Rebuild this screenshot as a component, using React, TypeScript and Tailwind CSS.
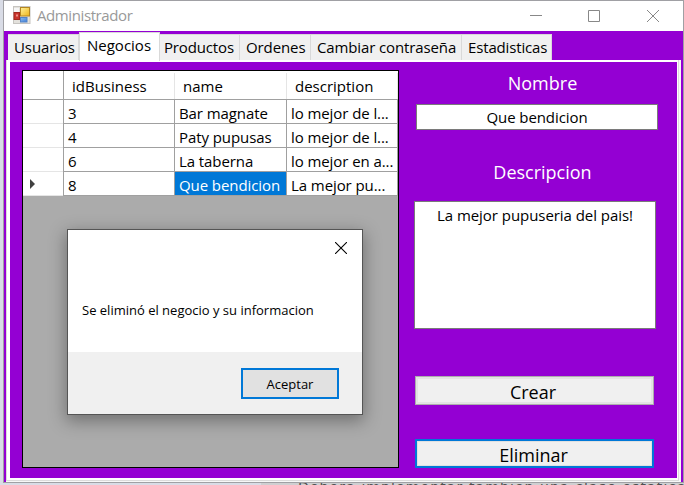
import React from "react";

const rows = [
  { id: "3", name: "Bar magnate", description: "lo mejor de l..." },
  { id: "4", name: "Paty pupusas", description: "lo mejor de l..." },
  { id: "6", name: "La taberna", description: "lo mejor en a..." },
  { id: "8", name: "Que bendicion", description: "La mejor pu..." },
];

const tabs = [
  { label: "Usuarios", box: "w-[71px] pl-[6px]", text: "tracking-[-0.1px]" },
  { label: "Negocios", box: "", text: "" },
  { label: "Productos", box: "w-[80px] pl-[4px]", text: "tracking-[-0.15px]" },
  { label: "Ordenes", box: "w-[71px] pl-[6px]", text: "tracking-[-0.1px]" },
  { label: "Cambiar contraseña", box: "w-[151px] pl-[6px]", text: "tracking-[-0.12px]" },
  { label: "Estadisticas", box: "w-[90px] pl-[6px]", text: "tracking-[-0.15px]" },
];

function AppIcon() {
  return (
    <svg width="18" height="18" viewBox="0 0 18 18" className="ml-[9px] mt-[5px] shrink-0">
      <defs>
        <linearGradient id="gold" x1="0" y1="0" x2="1" y2="1">
          <stop offset="0" stopColor="#fff19b" />
          <stop offset="1" stopColor="#edb519" />
        </linearGradient>
        <linearGradient id="sky" x1="0" y1="0" x2="1" y2="1">
          <stop offset="0" stopColor="#8ab9f0" />
          <stop offset="1" stopColor="#3f7fd8" />
        </linearGradient>
      </defs>
      <rect x="0.5" y="0.5" width="16.5" height="17" fill="#e3e1dc" stroke="#c6c4c0" />
      <rect x="1" y="2" width="5" height="4" fill="#f6f6f6" />
      <rect x="1" y="6.500" width="5.500" height="7" fill="#c8342d" stroke="#a4281f" />
      <rect x="3" y="8.500" width="2" height="2" fill="#ee9188" />
      <rect x="7.500" y="1.500" width="9" height="8.500" fill="url(#gold)" stroke="#b48622" />
      <rect x="7.500" y="11.500" width="6.500" height="4.500" fill="url(#sky)" stroke="#5283c8" />
    </svg>
  );
}

function TitleBar() {
  return (
    <div className="flex h-[30px] shrink-0 bg-white">
      <AppIcon />
      <span className="ml-[6px] mt-[3px] w-[400px] text-[15px] leading-[23px] tracking-[-0.4px] text-[#999]">Administrador</span>
      <svg width="130" height="30" viewBox="0 0 130 30" className="ml-[92px]" fill="none" stroke="#888">
        <path d="M1 14.500H13M59.500 9.500H70.500V20.500H59.500ZM118 9L130 21M130 9L118 21" />
      </svg>
    </div>
  );
}

function TabStrip() {
  return (
    <div className="flex h-[29px] shrink-0 items-end pl-[4px]">
      {tabs.map((tab, i) =>
        i === 1 ? (
          <div key={tab.label} className="relative z-10 h-[29px] w-[81px] border-x border-t border-[#d9d9d9] bg-white pl-[7px] pt-px leading-[23px]">
            <span className="whitespace-nowrap">{tab.label}</span>
          </div>
        ) : (
          <div key={tab.label} className={`h-[27px] border-r border-t border-[#d9d9d9] bg-[#f0f0f0] pt-px leading-[23px] ${tab.box}`}>
            <span className={`whitespace-nowrap ${tab.text}`}>{tab.label}</span>
          </div>
        ),
      )}
    </div>
  );
}

function BusinessGrid() {
  return (
    <div className="ml-[12px] mt-[8px] h-[398px] w-[377px] shrink-0 border border-black bg-[#ababab]">
      <div className="grid h-[29px] grid-cols-[41px_111px_112px_111px] border-b border-[#a0a0a0] bg-white leading-[27px]">
        <div className="border-r border-[#a0a0a0]" />
        <div className="mt-[2px] h-[26px] border-r border-[#e5e5e5] pl-[8px]">idBusiness</div>
        <div className="mt-[2px] h-[26px] border-r border-[#e5e5e5] pl-[8px]">name</div>
        <div className="mt-[2px] h-[26px] border-r border-[#e5e5e5] pl-[8px]">description</div>
      </div>
      {rows.map((row, i) => (
        <div key={row.id} className="grid h-[24px] grid-cols-[41px_111px_112px_111px] grid-rows-[24px] whitespace-nowrap bg-white leading-[26px] tracking-[-0.08px]">
          <div className="h-full border-r border-[#a0a0a0]">
            <div className="flex h-full items-center border-b border-[#e5e5e5] pl-[7px]">
              {i === 3 && (
                <svg width="5" height="10" viewBox="0 0 5 10">
                  <path d="M0 0L5 5L0 10Z" fill="#404040" />
                </svg>
              )}
            </div>
          </div>
          <div className="h-full border-b border-r border-[#a0a0a0] pl-[4px]">{row.id}</div>
          <div className={`h-full border-b border-r border-[#a0a0a0] pl-[4px] ${i === 3 ? "bg-[#0078d7] text-white" : ""}`}>{row.name}</div>
          <div className="h-full border-b border-r border-[#a0a0a0] pl-[4px]">{row.description}</div>
        </div>
      ))}
    </div>
  );
}

function BusinessForm() {
  return (
    <div className="ml-[15px] flex w-[244px] flex-col">
      <div className="mt-[9px] h-[24px] pl-[13px] text-center text-[18px] leading-[24px] text-white">Nombre</div>
      <div className="ml-[2px] mt-[9px] h-[26px] w-[242px] border border-[#7a7a7a] bg-white text-center leading-[25px] tracking-[-0.08px]">Que bendicion</div>
      <div className="mt-[30px] h-[24px] pl-[13px] text-center text-[18px] leading-[24px] text-white">Descripcion</div>
      <div className="mt-[17px] h-[128px] w-[242px] border border-[#7a7a7a] bg-white pt-px text-center leading-[24px] tracking-[-0.05px]">La mejor pupuseria del pais!</div>
      <div className="ml-px mt-[47px] h-[29px] w-[239px] border border-[#adadad] bg-[#f0f0f0]">
        <div className="h-full border-2 border-[#e3e3e3] pr-[3px] text-center text-[18px] leading-[26px]">Crear</div>
      </div>
      <div className="ml-px mt-[34px] h-[29px] w-[239px] border-2 border-[#0078d7] bg-[#f0f0f0]">
        <div className="h-full border border-[#e1e1e1] pr-[2px] text-center text-[18px] leading-[26px]">Eliminar</div>
      </div>
    </div>
  );
}

function MessageBox() {
  return (
    <div className="absolute left-[67px] top-[229px] flex h-[186px] w-[296px] flex-col border border-[#555] bg-white text-[13px] shadow-[0_5px_16px_1px_rgba(0,0,0,0.34)]">
      <svg width="12" height="12" viewBox="0 0 12 12" className="ml-auto mr-[15px] mt-[12px]" fill="none" stroke="#000" strokeWidth="1.100">
        <path d="M0 0L12 12M12 0L0 12" />
      </svg>
      <div className="mt-[46px] h-[20px] whitespace-nowrap pl-[14px] leading-[21px]">Se eliminó el negocio y su informacion</div>
      <div className="mt-auto flex h-[62px] bg-[#f0f0f0] pl-[173px] pt-[16px]">
        <div className="h-[31px] w-[98px] border-2 border-[#0078d7] bg-[#e1e1e1] text-center leading-[28px]">Aceptar</div>
      </div>
    </div>
  );
}

export default function App() {
  return (
    <div className="relative h-[485px] w-[684px] overflow-hidden bg-[#d9dce6] font-['Open_Sans','Noto_Sans',sans-serif] text-[15px] text-black">
      <div className="absolute left-[261px] top-[482px] h-[3px] w-[423px] overflow-hidden bg-[#cfcfd1]">
        <div className="-mt-[3px] ml-[37px] whitespace-nowrap font-['DejaVu_Sans'] text-[14px] leading-[16px] tracking-[1.1px] text-[#505050]">Debera implementar tambien una clase estatica</div>
      </div>
      <div className="absolute left-[315px] top-[-10px] text-[13px] leading-[14px] text-[#444]">CATO</div>
      <div className="relative ml-[3px] flex h-[483px] w-[681px] flex-col border border-[#a0a0a4] bg-[#9400d3]">
        <TitleBar />
        <div className="h-px shrink-0" />
        <TabStrip />
        <div className="-mt-px ml-[2px] mr-[2px] h-[422px] shrink-0 border-b border-r-2 border-[#f8f8f8]">
          <div className="h-full border-x border-b border-[#dcdcdc]">
            <div className="flex h-full border-b-2 border-l-[3px] border-r border-t-2 border-white bg-[#9400d3]">
              <BusinessGrid />
              <BusinessForm />
            </div>
          </div>
        </div>
      </div>
      <MessageBox />
    </div>
  );
}
